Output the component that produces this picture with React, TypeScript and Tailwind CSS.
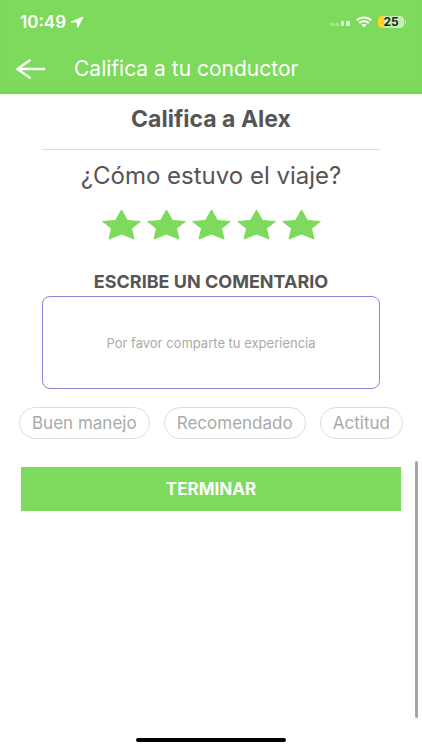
import { useState } from "react";

const tags = ["Buen manejo", "Recomendado", "Actitud"];

function StatusBar() {
  return (
    <div className="flex h-11 items-center justify-between pl-5 pr-4 text-white">
      <div className="flex items-center gap-1">
        <span className="text-[17px] font-semibold leading-5">10:49</span>
        <svg className="h-3 w-3.5" viewBox="0 0 14 12" fill="currentColor" stroke="currentColor" strokeWidth="1" strokeLinejoin="round" aria-hidden="true">
          <path d="M13 1 1 6H7.200L7.800 11.200Z" />
        </svg>
      </div>
      <div className="flex items-center gap-1.5">
        <svg className="h-2 w-5" viewBox="0 0 20 8" fill="currentColor" aria-hidden="true">
          <rect x="0" y="5" width="4" height="3" rx="1" opacity=".35" />
          <rect x="5" y="5" width="4" height="3" rx="1" opacity=".35" />
          <rect x="11" y="3" width="3" height="5" rx="1" opacity=".75" />
          <rect x="16" y="3" width="4" height="5" rx="1" opacity=".75" />
        </svg>
        <svg className="h-3 w-4" viewBox="0 0 16 12" fill="none" stroke="currentColor" strokeWidth="2" aria-hidden="true">
          <path d="M.7 4.300C4.800.4 11.200.4 15.300 4.300" />
          <path d="M3.300 7C6 4.600 10 4.600 12.700 7" />
          <path d="M8 11.200 5.400 8.800c1.500-1.300 3.700-1.300 5.200 0Z" fill="currentColor" stroke="none" />
        </svg>
        <div className="flex items-center gap-px">
          <div className="flex h-3 w-[26px] items-center justify-center rounded-sm bg-linear-to-r from-[#fed42d] from-25% to-[#c5efb6] to-25% text-xs font-bold leading-3 text-[#1d2a18]">
            25
          </div>
          <div className="h-1 w-px rounded-full bg-[#c5efb6]" />
        </div>
      </div>
    </div>
  );
}

function Star({ filled }: { filled: boolean }) {
  return (
    <svg className="h-[31px] w-[39px]" viewBox="0 0 39 31" aria-hidden="true">
      <path
        d="M19.500 1 25.500 11.500 38.300 12.500 29.500 19.500 32 30 19.500 25 7 30 9.500 19.500 .7 12.500 13.500 11.500Z"
        fill={filled ? "#7dda5c" : "#e2e2e2"}
        stroke={filled ? "#7dda5c" : "#e2e2e2"}
        strokeWidth="1"
        strokeLinejoin="round"
      />
    </svg>
  );
}

export default function App() {
  const [rating, setRating] = useState(5);
  const [selected, setSelected] = useState<string[]>([]);

  const toggle = (tag: string) =>
    setSelected((list) => (list.includes(tag) ? list.filter((t) => t !== tag) : [...list, tag]));

  return (
    <div className="relative flex min-h-screen flex-col bg-white font-['Inter','Liberation_Sans',sans-serif] text-[#555555]">
      <header className="bg-[#7dda5c] pb-2 shadow-[inset_0_-6px_6px_-6px_#6fca50,0_1px_2px_#e2f5da]">
        <StatusBar />
        <div className="flex h-[42px] items-center gap-7 px-4 pt-2">
          <button type="button" aria-label="Volver" className="text-white">
            <svg className="h-5 w-[30px]" viewBox="0 0 30 20" fill="none" stroke="currentColor" strokeWidth="2.500" strokeLinecap="round" strokeLinejoin="round" aria-hidden="true">
              <path d="M28 10H1.500M13.500 1.500 1.500 10l12 8.500" />
            </svg>
          </button>
          <span className="text-[21px] leading-6 text-white">Califica a tu conductor</span>
        </div>
      </header>

      <main className="flex flex-col">
        <div className="flex flex-col px-[42px]">
          <h1 className="border-b border-[#dddddd] pb-4 pt-[11px] text-center text-[23px] font-bold leading-7">
            Califica a Alex
          </h1>
          <h2 className="pt-3 text-center text-2xl leading-7">¿Cómo estuvo el viaje?</h2>
          <div className="flex justify-center gap-1.5 pt-[19px]">
            {[1, 2, 3, 4, 5].map((n) => (
              <button key={n} type="button" aria-label={`${n} de 5`} onClick={() => setRating(n)}>
                <Star filled={n <= rating} />
              </button>
            ))}
          </div>
          <label htmlFor="comment" className="pt-8 text-center text-[18px] font-bold leading-5">
            ESCRIBE UN COMENTARIO
          </label>
          <textarea
            id="comment"
            placeholder="Por favor comparte tu experiencia"
            className="mt-1 block h-[93px] w-full resize-none rounded-lg border border-[#9b7fdb] px-3 py-9 text-center text-[13px] leading-5 outline-none placeholder:text-[#aaaaaa]"
          />
        </div>

        <div className="flex justify-between px-[19px] pt-[18px]">
          {tags.map((tag) => (
            <button
              key={tag}
              type="button"
              aria-pressed={selected.includes(tag)}
              onClick={() => toggle(tag)}
              className="h-8 rounded-full border border-[#dddddd] px-3 text-[17px] leading-5 text-[#aaaaaa] aria-pressed:border-[#7dda5c] aria-pressed:text-[#555555]"
            >
              {tag}
            </button>
          ))}
        </div>

        <div className="px-[21px] pt-7">
          <button type="button" className="h-11 w-full bg-[#7dda5c] text-[17px] font-bold leading-5 text-white">
            TERMINAR
          </button>
        </div>
      </main>

      <div className="absolute bottom-8 right-1 h-[257px] w-[3px] rounded-full bg-[#a6a6a6]" />
      <div className="mt-auto flex justify-center pb-2">
        <div className="h-1 w-[150px] rounded-full bg-black" />
      </div>
    </div>
  );
}
